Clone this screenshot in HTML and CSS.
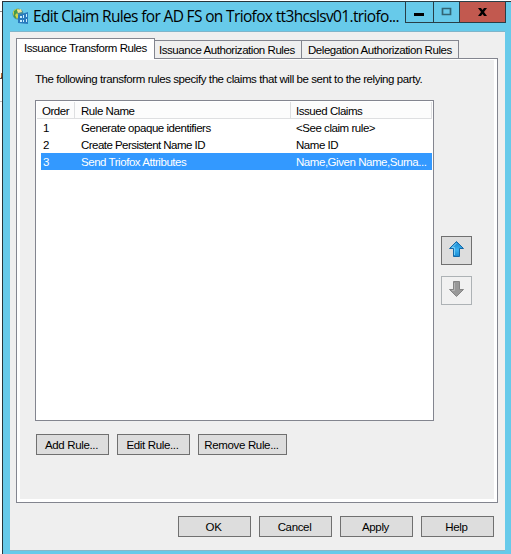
FILE: index.html
```html
<!DOCTYPE html>
<html lang="en">
<head>
<meta charset="utf-8">
<title>Edit Claim Rules</title>
<link rel="stylesheet" href="styles.css">
</head>
<body>
<div class="backdrop"><i class="rule"></i><b class="bit-one">u</b><i class="rule second"></i><b class="bit-two">t</b></div>
<main class="window">
  <header class="titlebar">
    <svg class="app-icon" width="17" height="17" viewBox="0 0 17 17">
      <circle cx="6" cy="6" r="5.5" fill="#448d9c"/>
      <path d="M1 4Q3 0 7 1L5 5L7 8L5 11Q1 9 1 4Z" fill="#d6d54a"/>
      <path d="M2 3L5 1L6 4L3 7L5 11L2 9Z" fill="#469b48"/>
      <path d="M5 2L9 1L10 4L6 5Z" fill="#f4df94"/>
      <path d="M6 7L16 4V16L6 15Z" fill="#2879bd"/>
      <path d="M8 8h2v2H8zM11 7h1v3h-1zM14 6h1v3h-1zM8 12h2v2H8zM11 12h1v2h-1zM14 11h1v3h-1z" fill="#c7ecff"/>
    </svg>
    <h1 class="title">Edit Claim Rules for AD FS on Triofox tt3hcslsv01.triofo...</h1>
    <div class="controls">
      <span class="control minimize"><svg width="27" height="20"><path d="M8 11h10v3H8z" fill="#000"/></svg></span>
      <span class="control maximize"><svg width="25" height="20"><path d="M8.500 6.500h8v6h-8z" fill="none" stroke="#326574" stroke-width="1.700"/></svg></span>
      <span class="control close"><svg width="45" height="20"><path d="M18 6h3l1.500 2L24 6h3l-3 4 3 4h-3l-1.500-2L21 14h-3l3-4z" fill="#000"/></svg></span>
    </div>
  </header>
  <div class="client">
    <nav class="tabs">
      <span class="tab active">Issuance Transform Rules</span>
      <span class="tab authorization">Issuance Authorization Rules</span>
      <span class="tab delegation">Delegation Authorization Rules</span>
    </nav>
    <section class="panel">
      <p class="intro">The following transform rules specify the claims that will be sent to the relying party.</p>
      <div class="content">
        <div class="list">
          <div class="row head"><span>Order</span><span class="rule-name">Rule Name</span><span>Issued Claims</span></div>
          <div class="row"><span>1</span><span>Generate opaque identifiers</span><span>&lt;See claim rule&gt;</span></div>
          <div class="row"><span>2</span><span class="persistent">Create Persistent Name ID</span><span>Name ID</span></div>
          <div class="row selected"><span>3</span><span>Send Triofox Attributes</span><span class="attributes">Name,Given Name,Surna...</span></div>
        </div>
        <div class="arrows">
          <button class="arrow" aria-label="Move up"><svg width="17" height="19" viewBox="0 0 17 19"><defs><linearGradient id="blue" x2="0" y2="1"><stop stop-color="#1682cb"/><stop offset=".55" stop-color="#3cb1ef"/><stop offset="1" stop-color="#168bd4"/></linearGradient></defs><path d="M8.500 1.500L15.500 8.500H11.500V16.500H5.500V8.500H1.500z" fill="url(#blue)" stroke="#1768a6"/><path d="M8.500 3L4 7.500h2.500V15" fill="none" stroke="#77cdf6"/></svg></button>
          <button class="arrow off" aria-label="Move down" disabled><svg width="17" height="19" viewBox="0 0 17 19"><path d="M5.500 1.500H11.500V9.500H15.500L8.500 16.500 1.500 9.500H5.500z" fill="#999" stroke="#858585"/><path d="M6.500 3v7.500H4" fill="none" stroke="#b5b5b5"/></svg></button>
        </div>
      </div>
      <div class="actions"><button>Add Rule...</button><button>Edit Rule...</button><button class="remove">Remove Rule...</button></div>
    </section>
    <footer class="footer"><button>OK</button><button>Cancel</button><button>Apply</button><button>Help</button></footer>
  </div>
</main>
</body>
</html>
```
FILE: styles.css
```css
* { box-sizing: border-box; }
body { margin: 0; width: 511px; height: 554px; overflow: hidden; background: #fff; font: 11.5px/16px "Liberation Sans", sans-serif; letter-spacing: -.45px; color: #000; position: relative; }
.backdrop { position: absolute; inset: 0; overflow: hidden; font-size: 11px; }
.backdrop b { position: absolute; left: -3px; font-weight: normal; }
.bit-one { top: 67px; }
.bit-two { top: 86px; }
.rule { position: absolute; top: 11px; left: 0; width: 2px; height: 1px; background: #888; }
.second { top: 101px; background: #bbb; }
.window { position: relative; margin-left: 2px; padding-top: 1px; width: 509px; height: 553px; }
.window::before { content: ""; position: absolute; inset: 1px 0 -1px; border: solid #28343a; border-width: 1px 0 0 1px; background: #67caea; }
.titlebar { position: relative; height: 30px; display: flex; padding-left: 10px; }
.app-icon { margin-top: 7px; flex: none; }
.title { margin: 3px 0 0 4px; width: 372px; flex: none; font: 15.5px/24px "Open Sans", sans-serif; letter-spacing: -.65px; white-space: nowrap; }
.controls { display: flex; height: 22px; border: 1px solid #283e47; }
.control { display: block; height: 20px; border-right: 1px solid #283e47; }
.control svg { display: block; }
.minimize { width: 28px; }
.maximize { width: 26px; }
.close { width: 45px; background: #c2594f; border: 0; }
.client { position: relative; width: 495px; height: 520px; margin-left: 8px; padding: 7px 7px 0 6px; background: #efefef; border-top: 1px solid #7fb5ca; border-bottom: 1px solid #8ab6c6; }
.tabs { position: relative; z-index: 1; display: flex; height: 19px; align-items: flex-end; white-space: nowrap; }
.tab { height: 18px; border: 1px solid #83858f; border-left: 0; border-bottom: 0; background: #efefef; padding: 1px 0 0 4px; }
.active { width: 139px; height: 21px; margin-bottom: -1px; border-left: 1px solid #83858f; background: #fff; padding: 1px 0 0 7px; }
.authorization { width: 147px; }
.delegation { width: 157px; padding-left: 6px; }
.panel { width: 482px; height: 445px; background: #efefef; border: 1px solid #83858f; padding: 12px 0 0 18px; box-shadow: inset 3px 1px #fff, inset -3px -3px #fff; }
.intro { margin: 0 0 13px; white-space: nowrap; letter-spacing: -.42px; }
.content { display: flex; height: 321px; gap: 7px; }
.list { width: 399px; height: 321px; background: #fff; border: 1px solid #83858f; padding: 1px 1px 0 5px; }
.row { display: grid; grid-template-columns: 38px 215px 1fr; height: 17px; line-height: 19px; white-space: nowrap; }
.row > span { padding-left: 2px; height: 17px; }
.head { margin-left: -4px; grid-template-columns: 38px 216px 1fr; background: #fcfcfc; border-bottom: 1px solid #dedfe1; }
.head > span { border-right: 1px solid #dedfe1; padding-left: 5px; height: 16px; }
.head > .rule-name { padding-left: 6px; }
.persistent { letter-spacing: -.54px; }
.attributes { letter-spacing: -.45px; }
.selected { background: #3399ff; color: #fff; }
.arrows { padding-top: 136px; display: flex; flex-direction: column; gap: 11px; }
button { width: 73px; height: 21px; padding: 0 2px 0 0; border: 1px solid #707070; border-radius: 0; background: #ddd; font: inherit; line-height: 18px; letter-spacing: -.35px; color: #000; text-align: center; }
.arrow { width: 31px; height: 29px; display: flex; justify-content: center; align-items: center; padding-right: 1px; padding-bottom: 2px; }
.off { background: #f1f1f1; border-color: #adb2b5; }
.actions { display: flex; gap: 8px; margin: 13px 0 0 1px; }
.remove { width: 89px; }
.footer { display: flex; justify-content: flex-end; gap: 8px; margin: 13px 4px 0 0; }
```
